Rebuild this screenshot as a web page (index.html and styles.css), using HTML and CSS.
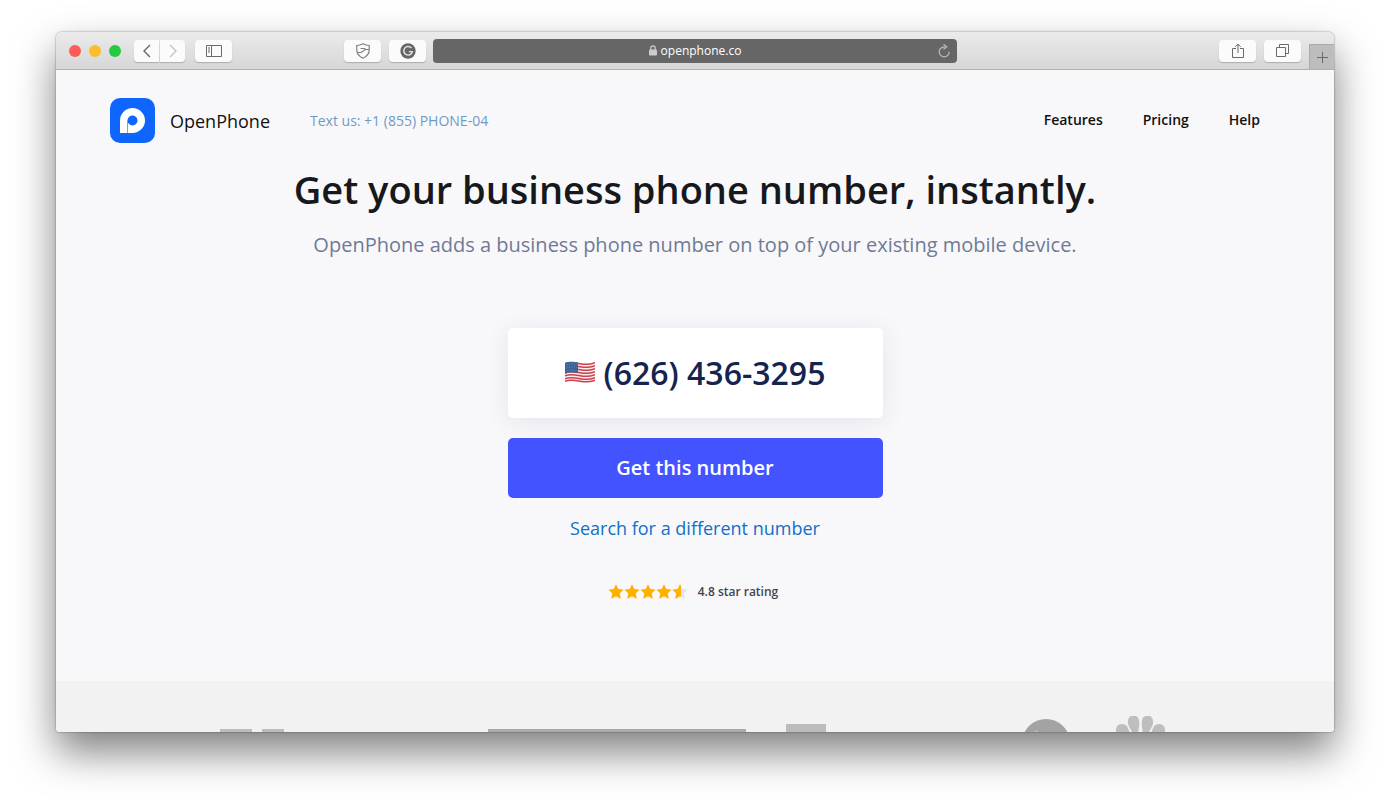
FILE: index.html
```html
<!DOCTYPE html>
<html lang="en">
<head>
<meta charset="UTF-8">
<meta name="viewport" content="width=device-width, initial-scale=1.0">
<title>OpenPhone</title>
<link rel="stylesheet" href="styles.css">
</head>
<body>
<div class="window">

	<div class="toolbar">
		<div class="toolbar-side">
			<div class="lights">
				<span class="light red"></span>
				<span class="light yellow"></span>
				<span class="light green"></span>
			</div>
			<div class="history">
				<button type="button" class="tool back" aria-label="Back">
					<svg width="10" height="14" viewBox="0 0 10 14"><path d="M8 1 2 7l6 6" fill="none" stroke="#666" stroke-width="1.4"/></svg>
				</button>
				<button type="button" class="tool forward" aria-label="Forward">
					<svg width="10" height="14" viewBox="0 0 10 14"><path d="m2 1 6 6-6 6" fill="none" stroke="#c4c4c4" stroke-width="1.4"/></svg>
				</button>
			</div>
			<button type="button" class="tool" aria-label="Sidebar">
				<svg width="16" height="12" viewBox="0 0 16 12"><path d="M.5.5h15v11H.5zM5.5.5v11M2 3h2M2 5h2M2 7h2" fill="none" stroke="#6a6a6a"/></svg>
			</button>
			<div class="extensions">
				<button type="button" class="tool" aria-label="Shield">
					<svg width="16" height="16" viewBox="0 0 16 16" fill="none" stroke="#808080" stroke-width="1.2"><path d="M8 .8c2 1.2 4 1.7 6.2 1.7V7c0 4-2.5 6.500-6.2 8.2C4.3 13.5 1.8 11 1.8 7V2.5C4 2.5 6 2 8 .8z"/><path d="M3 9.5h3l4.5-3H14M5.500 5.500h4l1 1"/></svg>
				</button>
				<button type="button" class="tool" aria-label="Grammar check">
					<svg width="16" height="16" viewBox="0 0 16 16"><circle cx="8" cy="8" r="7.7" fill="#666"/><path d="M11.500 5.200A4.300 4.300 0 1 0 12.300 8.600H8.800" fill="none" stroke="#e4e4e4" stroke-width="1.4"/></svg>
				</button>
			</div>
		</div>
		<div class="address">
			<div class="url">
				<svg width="8" height="11" viewBox="0 0 8 11"><rect y="4.5" width="8" height="6" rx="1" fill="#ccc"/><path d="M1.8 5V3a2.2 2.2 0 0 1 4.4 0v2" fill="none" stroke="#ccc" stroke-width="1.2"/></svg>
				<span>openphone.co</span>
			</div>
			<button type="button" class="reload" aria-label="Reload">
				<svg width="13" height="14" viewBox="0 0 13 14"><path d="M7 2.800H6a5 5 0 1 0 5.200 5" fill="none" stroke="#bbb" stroke-width="1.2"/><path d="m5.500.3 3.300 2.500-3.300 2.500" fill="none" stroke="#bbb" stroke-width="1.2"/></svg>
			</button>
		</div>
		<div class="toolbar-side toolbar-right">
			<button type="button" class="tool" aria-label="Share">
				<svg width="12" height="16" viewBox="0 0 12 16"><path d="M4 5.500H.5v9h11v-9H8M6 10V1.200M3.300 3.800 6 1.100l2.700 2.700" fill="none" stroke="#6a6a6a"/></svg>
			</button>
			<button type="button" class="tool" aria-label="Show tabs">
				<svg width="13" height="13" viewBox="0 0 13 13"><path d="M.5 3.500h9v9h-9zM3.500 3.500v-3h9v9h-3" fill="none" stroke="#6a6a6a"/></svg>
			</button>
			<button type="button" class="new-tab" aria-label="New tab">
				<svg width="11" height="11" viewBox="0 0 11 11"><path d="M5.500 0v11M0 5.500h11" stroke="#6a6a6a"/></svg>
			</button>
		</div>
	</div>

	<div class="page">
		<header class="header">
			<a class="brand" href="#">
				<svg width="45" height="45" viewBox="0 0 45 45">
					<rect width="45" height="45" rx="10" fill="#0f66ff"/>
					<path d="M10 35V22.500a12.500 12.500 0 1 1 12.500 12.500H18V35z" fill="#fff"/>
					<path d="M17.500 35V23" stroke="#0f66ff" stroke-width=".6"/>
					<circle cx="22.500" cy="22.500" r="5" fill="#0f66ff"/>
				</svg>
				<span>OpenPhone</span>
			</a>
			<a class="text-us" href="#">Text us: +1 (855) PHONE-04</a>
			<nav class="nav">
				<a href="#">Features</a>
				<a href="#">Pricing</a>
				<a href="#">Help</a>
			</nav>
		</header>

		<main class="hero">
			<h1>Get your business phone number, instantly.</h1>
			<p class="subtitle">OpenPhone adds a business phone number on top of your existing mobile device.</p>
			<div class="picker">
				<div class="number">
					<svg width="30" height="22" viewBox="0 0 30 22" role="img" aria-label="US">
						<path d="M0 2c5-2 10-1 15 0s10 1 15-1v18c-5 2-10 2-15 1s-10-1-15 1z" fill="#f5eeee"/>
						<g fill="none" stroke="#d0404c" stroke-width="1.5">
							<path d="M0 2.700c5-2 10-1 15 0s10 1 15-1"/>
							<path d="M0 5.700c5-2 10-1 15 0s10 1 15-1"/>
							<path d="M0 8.700c5-2 10-1 15 0s10 1 15-1"/>
							<path d="M0 11.700c5-2 10-1 15 0s10 1 15-1"/>
							<path d="M0 14.700c5-2 10-1 15 0s10 1 15-1"/>
							<path d="M0 17.700c5-2 10-1 15 0s10 1 15-1"/>
							<path d="M0 20.200c5-2 10-1 15 0s10 1 15-1"/>
						</g>
						<path d="M0 2c4-1.600 9-1.300 13-.4v10.500c-4-1-9-1-13 .6z" fill="#3b6397"/>
						<path d="M1.500 4c4-1.500 7-1.200 10.500-.5M1.500 7c4-1.500 7-1.200 10.500-.5M1.500 10c4-1.500 7-1.200 10.500-.5" fill="none" stroke="#7c9abf" stroke-width=".7" stroke-dasharray="1 1.500"/>
					</svg>
					<span>(626) 436-3295</span>
				</div>
				<button type="button" class="get-number">Get this number</button>
			</div>
			<a class="search" href="#">Search for a different number</a>
			<div class="rating">
				<svg width="80" height="16" viewBox="0 0 80 16">
					<defs>
						<path id="star" d="m8 .2 2.300 4.900 5.400.7-4 3.700 1.100 5.400L8 12.300l-4.800 2.600 1.100-5.400-4-3.700 5.400-.7z"/>
						<clipPath id="half"><path d="M0 0h9v16H0z"/></clipPath>
					</defs>
					<g fill="#ffb000">
						<use href="#star"/>
						<use href="#star" x="16"/>
						<use href="#star" x="32"/>
						<use href="#star" x="48"/>
						<use href="#star" x="64" fill="#dfe3ea"/>
						<g transform="translate(64)"><use href="#star" clip-path="url(#half)"/></g>
					</g>
				</svg>
				<span>4.8 star rating</span>
			</div>
		</main>

		<section class="press">
			<svg width="72" height="40" viewBox="0 0 72 40"><path d="M0 13h32v27H0zM42 13h22v27H42z" fill="#bcbcbc"/></svg>
			<div class="press-group">
				<svg width="258" height="40" viewBox="0 0 258 40"><path d="M0 13h258v27H0z" fill="#aaa"/></svg>
				<svg width="40" height="40" viewBox="0 0 40 40"><path d="M0 8h40v32H0z" fill="#bcbcbc"/></svg>
			</div>
			<div class="press-group">
				<svg width="48" height="48" viewBox="0 0 48 48"><circle cx="24" cy="27" r="24" fill="#a3a3a3"/><path d="M11 16l5-2v4h-4z" fill="#bdbdbd"/></svg>
				<svg width="49" height="40" viewBox="0 0 49 40" fill="#bebebe">
					<path d="M12 5a5.500 5.500 0 0 1 11 0c1 4-1 10-2 20C17 16 11 10 12 5z"/>
					<path d="M37 5a5.500 5.500 0 0 0-11 0c-1 4 1 10 2 20 4-9 10-15 9-20z"/>
					<path d="M0 15c-1-7 7-9 11-5l8 18C10 23 1 21 0 15z"/>
					<path d="M49 15c1-7-7-9-11-5l-8 18c9-5 18-7 19-13z"/>
				</svg>
			</div>
		</section>
	</div>
</div>
</body>
</html>
```
FILE: styles.css
```css
* {
  box-sizing: border-box;
}

body {
  margin: 0;
  height: 100vh;
  padding: 32px 56px 80px;
  background: #fff;
  font-family: "Open Sans", "Noto Sans", sans-serif;
  overflow: hidden;
}

a {
  text-decoration: none;
}

svg {
  display: block;
  flex: none;
}

button {
  border: none;
  padding: 0;
  font-family: inherit;
  cursor: pointer;
}

.window {
  height: 100%;
  display: flex;
  flex-direction: column;
  border-radius: 6px 6px 4px 4px;
  overflow: hidden;
  box-shadow: 0 20px 40px rgba(0, 0, 0, 0.5), 0 0 2px rgba(0, 0, 0, 0.5);
}

/* browser toolbar */
.toolbar {
  flex: none;
  display: flex;
  align-items: center;
  height: 38px;
  background: linear-gradient(#ebebeb, #d6d6d6);
  border-bottom: 1px solid #b0b0b0;
}

.toolbar-side {
  flex: 1;
  display: flex;
  align-items: center;
  height: 100%;
}

.toolbar-right {
  justify-content: flex-end;
  gap: 8px;
}

.lights {
  display: flex;
  gap: 8px;
  margin: 0 13px;
}

.light {
  width: 12px;
  height: 12px;
  border-radius: 50%;
}

.red {
  background: #fc5b57;
}

.yellow {
  background: #fdbc2c;
}

.green {
  background: #28c840;
}

.tool {
  display: flex;
  align-items: center;
  justify-content: center;
  width: 37px;
  height: 22px;
  background: #fbfbfb;
  border-radius: 4px;
  box-shadow: 0 1px 1px rgba(0, 0, 0, 0.2);
}

.history {
  display: flex;
  gap: 1px;
  margin-right: 10px;
}

.back {
  width: 25px;
  border-radius: 4px 0 0 4px;
}

.forward {
  width: 25px;
  border-radius: 0 4px 4px 0;
}

.extensions {
  display: flex;
  gap: 8px;
  margin: 0 7px 0 auto;
}

.address {
  display: flex;
  align-items: center;
  width: 41%;
  height: 24px;
  padding: 0 6px 0 19px;
  background: #666;
  border-radius: 4px;
}

.url {
  flex: 1;
  display: flex;
  align-items: center;
  justify-content: center;
  gap: 4px;
  color: #fff;
  font-size: 12px;
}

.reload {
  background: none;
}

.new-tab {
  display: flex;
  align-items: center;
  justify-content: center;
  align-self: flex-end;
  width: 25px;
  height: 25px;
  background: #bdbdbd;
  border: 1px solid #aaa;
  border-width: 1px 0 0 1px;
}

/* page */
.page {
  flex: 1;
  display: flex;
  flex-direction: column;
  min-height: 0;
  background: #f8f8fa;
}

.header {
  display: flex;
  align-items: center;
  padding: 28px 74px 0 54px;
}

.brand {
  display: flex;
  align-items: center;
  gap: 15px;
  color: #111;
  font-size: 18px;
}

.text-us {
  margin-left: 40px;
  color: #6e9bc5;
  font-size: 14px;
}

.nav {
  display: flex;
  gap: 40px;
  margin-left: auto;
  padding-bottom: 2px;
}

.nav a {
  color: #111;
  font-size: 14px;
  font-weight: 600;
}

.hero {
  flex: 1;
  display: flex;
  flex-direction: column;
  align-items: center;
  text-align: center;
}

h1 {
  margin: 19px 0 0;
  color: #16181c;
  font-size: 38px;
  font-weight: 600;
  line-height: 54px;
}

.subtitle {
  margin: 13px 0 0;
  color: #6f7b95;
  font-size: 20px;
  line-height: 32px;
}

.picker {
  display: flex;
  flex-direction: column;
  gap: 20px;
  width: 375px;
  margin-top: 67px;
}

.number {
  display: flex;
  align-items: center;
  justify-content: center;
  gap: 9px;
  height: 90px;
  padding-bottom: 2px;
  background: #fff;
  border-radius: 5px;
  box-shadow: 0 4px 24px rgba(60, 50, 130, 0.1);
  color: #14244f;
  font-size: 32px;
  font-weight: 600;
}

.get-number {
  height: 60px;
  padding-bottom: 2px;
  background: #4353ff;
  border-radius: 5px;
  color: #fff;
  font-size: 20px;
  font-weight: 600;
}

.search {
  margin-top: 16px;
  color: #1070ca;
  font-size: 18px;
  line-height: 28px;
}

.rating {
  display: flex;
  align-items: center;
  gap: 10px;
  margin-top: 40px;
  padding-right: 4px;
  color: #43454d;
  font-size: 12px;
  font-weight: 600;
  line-height: 20px;
}

/* press logos, cut off by the window edge */
.press {
  flex: none;
  display: flex;
  justify-content: space-between;
  height: 51px;
  padding: 35px 169px 0 164px;
  background: #f2f2f2;
  overflow: hidden;
}

.press-group {
  display: flex;
  gap: 40px;
}

.press-group:last-child {
  gap: 46px;
}
```
